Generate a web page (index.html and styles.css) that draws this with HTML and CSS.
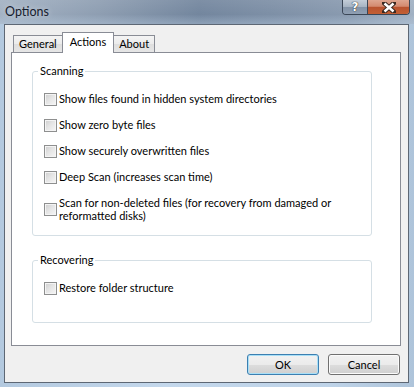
FILE: index.html
```html
<!DOCTYPE html>
<html lang="en">

<head>
    <meta charset="UTF-8">
    <meta name="viewport" content="width=device-width, initial-scale=1.0">
    <link rel="stylesheet" href="styles.css">
    <title>Options</title>
</head>

<body>
    <div class="window">
        <div class="titlebar">
            <span class="title">Options</span>
            <div class="caption-btns">
                <span class="cap-btn help">?</span>
                <span class="cap-btn close">
                    <svg width="14" height="11" viewBox="0 0 14 11">
                        <path d="M2 1 L12 10 M12 1 L2 10" stroke="#3b2a22" stroke-width="4.5" stroke-linecap="square" />
                        <path d="M2.5 1.5 L11.5 9.5 M11.5 1.5 L2.5 9.5" stroke="#fff" stroke-width="2.4" />
                    </svg>
                </span>
            </div>
        </div>

        <div class="client">
            <div class="tabs">
                <div class="tab">General</div>
                <div class="tab active">Actions</div>
                <div class="tab">About</div>
            </div>

            <div class="tab-panel">
                <fieldset class="group scanning">
                    <legend>Scanning</legend>
                    <label class="check">
                        <span class="box"></span>
                        <span>Show files found in hidden system directories</span>
                    </label>
                    <label class="check">
                        <span class="box"></span>
                        <span>Show zero byte files</span>
                    </label>
                    <label class="check">
                        <span class="box"></span>
                        <span>Show securely overwritten files</span>
                    </label>
                    <label class="check">
                        <span class="box"></span>
                        <span>Deep Scan (increases scan time)</span>
                    </label>
                    <label class="check multi">
                        <span class="box"></span>
                        <span>Scan for non-deleted files (for recovery from damaged or<br>reformatted disks)</span>
                    </label>
                </fieldset>

                <fieldset class="group recovering">
                    <legend>Recovering</legend>
                    <label class="check">
                        <span class="box"></span>
                        <span>Restore folder structure</span>
                    </label>
                </fieldset>
            </div>

            <div class="dialog-btns">
                <button class="btn default">OK</button>
                <button class="btn">Cancel</button>
            </div>
        </div>
    </div>
</body>

</html>
```

FILE: styles.css
```css
* {
    margin: 0;
    padding: 0;
    box-sizing: border-box;
}

body {
    font-family: 'Lato', 'Liberation Sans', sans-serif;
    font-size: 11px;
    color: #000;
    background: #bcd3ea;
}

.window {
    height: 387px;
    width: 414px;
    display: flex;
    flex-direction: column;
    background: linear-gradient(90deg, #b3c9df 0%, #c4d8ec 40%, #bed3e8 80%, #aec4da 100%);
}

/* title bar */
.titlebar {
    height: 24px;
    display: flex;
    justify-content: space-between;
    align-items: flex-start;
    background:
        linear-gradient(180deg, rgba(255, 255, 255, 0.08) 0%, rgba(255, 255, 255, 0) 60%, rgba(190, 210, 230, 0.35) 100%),
        linear-gradient(90deg, #a3b2c3 0%, #8d9db1 25%, #73869e 48%, #7d8fa6 65%, #8a9bb0 85%, #a1b1c3 100%);
}

.title {
    margin: 3px 0 0 5px;
    font-size: 12.5px;
    line-height: 17px;
    color: #16202e;
    text-shadow: 0 0 6px rgba(255, 255, 255, 0.6);
}

.caption-btns {
    display: flex;
    margin-right: 4px;
    border: 1px solid #3a4656;
    border-top: none;
    border-radius: 0 0 4px 4px;
    overflow: hidden;
    height: 15px;
}

.cap-btn {
    height: 14px;
    display: flex;
    align-items: center;
    justify-content: center;
}

.help {
    width: 25px;
    color: #fff;
    font-family: 'DejaVu Sans', sans-serif;
    font-weight: bold;
    font-size: 12px;
    text-shadow: 0 0 1px #222, 0 0 1px #222;
    background: linear-gradient(180deg, #c3cdd8 0%, #a6b3c2 50%, #8393a7 51%, #8f9fb3 100%);
    border-right: 1px solid #3a4656;
}

.close {
    width: 41px;
    background: linear-gradient(180deg, #dea690 0%, #d48a6f 45%, #b9532f 52%, #c25f34 100%);
}

/* client area */
.client {
    flex: 1;
    margin: 0 5px 4px 4px;
    border: 1px solid #5d6774;
    background: #f0f0f0;
    padding: 7px 7px 7px 6px;
    display: flex;
    flex-direction: column;
}

.tabs {
    height: 20px;
    display: flex;
    align-items: flex-end;
    margin-left: 2px;
    position: relative;
    z-index: 1;
}

.tab {
    height: 17px;
    padding: 0 5px;
    line-height: 16px;
    border: 1px solid #898c95;
    border-bottom: none;
    background: linear-gradient(180deg, #f4f4f4 0%, #ebebeb 50%, #dedede 51%, #e6e6e6 100%);
    margin-left: -1px;
}

.tab:first-child {
    margin-left: 0;
}

.tab.active {
    height: 21px;
    margin-bottom: -1px;
    padding: 0 7px 3px;
    background: #fff;
    line-height: 17px;
}

.tab-panel {
    height: 294px;
    border: 1px solid #898c95;
    background: #fff;
}

/* group boxes */
.group {
    border: 1px solid #d5dfe5;
    border-radius: 3px;
    margin: 11px 28px 0 20px;
    padding: 0 8px 0 11px;
}

.group legend {
    margin-left: -6px;
    padding: 0 2px;
    line-height: 14px;
}

.scanning {
    padding-top: 14px;
    padding-bottom: 13px;
}

.recovering {
    margin-top: 17px;
    padding-top: 14px;
    padding-bottom: 27px;
}

.check {
    display: flex;
    align-items: center;
    gap: 2px;
    line-height: 14px;
    margin-bottom: 12px;
}

.check:last-child {
    margin-bottom: 0;
}

.check.multi {
    line-height: 13px;
}

.box {
    flex: none;
    width: 13px;
    height: 13px;
    border: 1px solid #8e8f8f;
    box-shadow: inset 0 0 0 1px #f4f4f4;
    background: linear-gradient(135deg, #cdcdcd 0%, #e4e4e4 45%, #f6f6f6 100%);
}

/* dialog buttons */
.dialog-btns {
    display: flex;
    justify-content: flex-end;
    gap: 9px;
    margin-top: 8px;
    padding-right: 1px;
}

.btn {
    width: 72px;
    height: 21px;
    font-family: inherit;
    font-size: 11px;
    color: #000;
    border: 1px solid #707070;
    border-radius: 3px;
    background: linear-gradient(180deg, #f2f2f2 0%, #ebebeb 50%, #dddddd 51%, #cfcfcf 100%);
    box-shadow: inset 0 0 0 1px #fbfbfb;
}

.btn.default {
    border-color: #3c7fb1;
    box-shadow: inset 0 0 0 1px #a8dff7;
}
```
